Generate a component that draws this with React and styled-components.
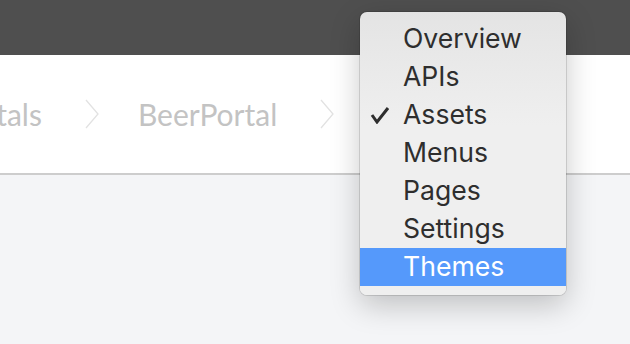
import React from 'react';
import styled, { createGlobalStyle } from 'styled-components';

const GlobalStyle = createGlobalStyle`
  html, body {
    margin: 0;
    padding: 0;
    background: #f4f5f7;
    overflow: hidden;
  }
`;

const Page = styled.div`
  position: relative;
  width: 630px;
  height: 344px;
  background: #f4f5f7;
`;

const TopBar = styled.div`
  height: 55px;
  background: #4f4f4f;
`;

const Header = styled.div`
  height: 118px;
  background: #fff;
  border-bottom: 2px solid #cdcdcd;
  display: flex;
  align-items: center;
  overflow: hidden;
`;

const Crumbs = styled.div`
  display: flex;
  align-items: center;
  margin-left: -49px;
  font-family: Lato, 'Liberation Sans', sans-serif;
  font-size: 30px;
  color: #c3c3c3;
`;

const Crumb = styled.span`
  white-space: nowrap;
  line-height: 32px;
`;

const Chevron = styled.svg`
  width: 16px;
  height: 32px;
  margin: 0 38px 0 42px;
  flex: none;
`;

const Menu = styled.div`
  position: absolute;
  left: 360px;
  top: 12px;
  width: 206px;
  padding: 8px 0 9px;
  border-radius: 7px;
  background: linear-gradient(#e4e4e4, #efefef 40%, #efefef);
  box-shadow: 0 0 0 1px rgba(0, 0, 0, 0.12), 0 10px 30px rgba(0, 0, 0, 0.22);
  font-family: Inter, 'Liberation Sans', sans-serif;
  font-size: 26.6px;
  color: #2e2e2e;
  overflow: hidden;
`;

const Item = styled.div`
  position: relative;
  height: 38px;
  line-height: 37px;
  padding-left: 43px;
  background: ${p => (p.$active ? '#5599fb' : 'transparent')};
  color: ${p => (p.$active ? '#fff' : '#2e2e2e')};
`;

const Check = styled.svg`
  position: absolute;
  left: 10px;
  top: 10px;
  width: 20px;
  height: 18px;
`;

const items = ['Overview', 'APIs', 'Assets', 'Menus', 'Pages', 'Settings', 'Themes'];

function ChevronIcon() {
  return (
    <Chevron viewBox="0 0 16 32">
      <polyline points="2,2 14,16 2,30" fill="none" stroke="#e2e2e2" strokeWidth="1.3" />
    </Chevron>
  );
}

export default function App() {
  return (
    <>
      <GlobalStyle />
      <Page>
        <TopBar />
        <Header>
          <Crumbs>
            <Crumb>Portals</Crumb>
            <ChevronIcon />
            <Crumb>BeerPortal</Crumb>
            <ChevronIcon />
          </Crumbs>
        </Header>
        <Menu>
          {items.map(name => (
            <Item key={name} $active={name === 'Themes'}>
              {name === 'Assets' && (
                <Check viewBox="0 0 20 18">
                  <polyline points="2,9 7,16 18,2" fill="none" stroke="#2e2e2e" strokeWidth="3" />
                </Check>
              )}
              {name}
            </Item>
          ))}
        </Menu>
      </Page>
    </>
  );
}
